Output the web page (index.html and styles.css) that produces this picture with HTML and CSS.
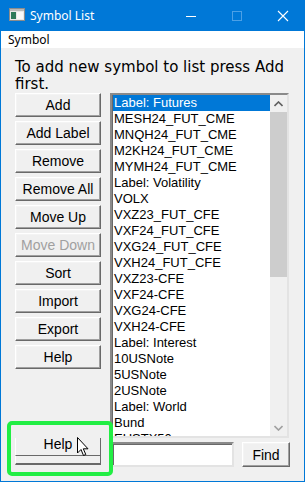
FILE: index.html
```html
<!DOCTYPE html>
<html lang="en">
<head>
    <meta charset="UTF-8">
    <title>Symbol List</title>
    <link rel="stylesheet" href="styles.css">
</head>
<body>
<div class="window">
    <div class="titlebar">
        <svg class="app-icon" width="16" height="14" viewBox="0 0 16 14">
            <rect x="0.5" y="0.5" width="15" height="12" fill="#e8e8e8" stroke="#8c8c8c"/>
            <rect x="1" y="1" width="14" height="2" fill="#b9b9b9"/>
            <rect x="2" y="4" width="5" height="7" fill="#2d7a5a"/>
            <rect x="8" y="4" width="6" height="7" fill="#f8f8f8"/>
        </svg>
        <span class="title">Symbol List</span>
        <div class="caption-buttons">
            <svg width="46" height="30" viewBox="0 0 46 30"><line x1="18" y1="15.5" x2="28" y2="15.5" stroke="#fff"/></svg>
            <svg width="46" height="30" viewBox="0 0 46 30"><rect x="18.5" y="10.5" width="9" height="9" fill="none" stroke="#4ca0e6"/></svg>
            <svg width="46" height="30" viewBox="0 0 46 30"><path d="M18 10 L28 20 M28 10 L18 20" stroke="#fff" stroke-width="1.1"/></svg>
        </div>
    </div>
    <div class="menubar"><span>Symbol</span></div>

    <div class="content">
        <p class="hint">To add new symbol to list press Add first.</p>

        <div class="main">
            <div class="buttons">
                <button class="btn">Add</button>
                <button class="btn">Add Label</button>
                <button class="btn">Remove</button>
                <button class="btn">Remove All</button>
                <button class="btn">Move Up</button>
                <button class="btn" disabled>Move Down</button>
                <button class="btn">Sort</button>
                <button class="btn">Import</button>
                <button class="btn">Export</button>
                <button class="btn">Help</button>
            </div>

            <div class="listbox">
                <ul class="items">
                    <li class="selected">Label: Futures</li>
                    <li>MESH24_FUT_CME</li>
                    <li>MNQH24_FUT_CME</li>
                    <li>M2KH24_FUT_CME</li>
                    <li>MYMH24_FUT_CME</li>
                    <li>Label: Volatility</li>
                    <li>VOLX</li>
                    <li>VXZ23_FUT_CFE</li>
                    <li>VXF24_FUT_CFE</li>
                    <li>VXG24_FUT_CFE</li>
                    <li>VXH24_FUT_CFE</li>
                    <li>VXZ23-CFE</li>
                    <li>VXF24-CFE</li>
                    <li>VXG24-CFE</li>
                    <li>VXH24-CFE</li>
                    <li>Label: Interest</li>
                    <li>10USNote</li>
                    <li>5USNote</li>
                    <li>2USNote</li>
                    <li>Label: World</li>
                    <li>Bund</li>
                    <li>EUSTX50</li>
                </ul>
                <div class="scrollbar">
                    <div class="arrow">
                        <svg width="9" height="6" viewBox="0 0 9 6"><path d="M0.5 5 L4.5 1 L8.5 5" fill="none" stroke="#606060" stroke-width="1.6"/></svg>
                    </div>
                    <div class="thumb"></div>
                    <div class="track"></div>
                    <div class="arrow">
                        <svg width="9" height="6" viewBox="0 0 9 6"><path d="M0.5 1 L4.5 5 L8.5 1" fill="none" stroke="#a0a0a0" stroke-width="1.6"/></svg>
                    </div>
                </div>
            </div>
        </div>

        <div class="bottom">
            <div class="help-ghost">
                <div class="ghost-top">Help</div>
                <div class="ghost-bottom"></div>
            </div>
            <input type="text" class="find-input">
            <button class="btn find-btn">Find</button>
        </div>

        <div class="highlight"></div>
        <svg class="cursor" width="14" height="21" viewBox="0 0 14 21">
            <path d="M0.5 0.5 L0.5 16 L4 12.5 L6.5 18.5 L8.8 17.5 L6.3 11.8 L11 11.8 Z" fill="#fff" stroke="#000" stroke-linejoin="miter"/>
        </svg>
    </div>
</div>
</body>
</html>
```

FILE: styles.css
```css
* {
    box-sizing: border-box;
}
body {
    margin: 0;
    background-color: #f0f0f0;
    font-family: "Liberation Sans", Arial, sans-serif;
}
.window {
    width: 305px;
    height: 482px;
    border: 1px solid #0078d7;
    border-top: none;
    background-color: #f0f0f0;
    display: flex;
    flex-direction: column;
}
.titlebar {
    height: 31px;
    background-color: #0078d7;
    color: white;
    display: flex;
    align-items: center;
    margin: 0 -1px;
    padding-left: 9px;
}
.app-icon {
    margin-top: -1px;
}
.title {
    font-family: "Noto Sans", sans-serif;
    font-size: 12px;
    margin-left: 5px;
    flex: 1;
}
.caption-buttons {
    display: flex;
    margin-right: -1px;
}
.caption-buttons svg {
    display: block;
}
.menubar {
    height: 17px;
    background-color: white;
    font-family: "Noto Sans", sans-serif;
    font-size: 12px;
    line-height: 17px;
    padding-left: 7px;
}
.content {
    position: relative;
    flex: 1;
    padding: 11px 14px 0 14px;
}
.hint {
    margin: 0;
    font-family: "DejaVu Sans", sans-serif;
    font-size: 15px;
    line-height: 17px;
    color: black;
}
.main {
    display: flex;
    height: 345px;
}
.buttons {
    width: 86px;
    display: flex;
    flex-direction: column;
    gap: 4px;
}
.btn {
    height: 24px;
    padding: 0;
    font-family: "Liberation Sans", Arial, sans-serif;
    font-size: 14px;
    color: black;
    background-color: #f0f0f0;
    border: 1px solid;
    border-color: #ffffff #696969 #696969 #ffffff;
    box-shadow: inset -1px -1px #a0a0a0, inset 1px 1px #f4f4f4;
    border-radius: 0;
}
.btn:disabled {
    color: #a0a0a0;
}
.listbox {
    margin-left: 9px;
    width: 179px;
    height: 345px;
    display: flex;
    background-color: white;
    border: 2px solid;
    border-color: #8a8a8a #e3e3e3 #e3e3e3 #8a8a8a;
    box-shadow: inset 1px 1px #696969;
    overflow: hidden;
}
.items {
    list-style: none;
    margin: 0;
    padding: 0 0 0 1px;
    flex: 1;
    font-size: 13px;
    line-height: 16px;
    color: black;
    overflow: hidden;
}
.items li {
    padding-left: 1px;
    height: 16px;
    white-space: nowrap;
}
.items .selected {
    background-color: #0078d7;
    color: white;
}
.scrollbar {
    width: 17px;
    display: flex;
    flex-direction: column;
    background-color: #f0f0f0;
}
.arrow {
    height: 17px;
    display: flex;
    align-items: center;
    justify-content: center;
}
.thumb {
    height: 165px;
    background-color: #cdcdcd;
}
.track {
    flex: 1;
}
.bottom {
    display: flex;
    align-items: flex-start;
    height: 31px;
}
.help-ghost {
    width: 86px;
    font-size: 14px;
}
.ghost-top {
    height: 18px;
    border-left: 1px solid white;
    border-right: 1px solid #696969;
    border-bottom: 1px solid #696969;
    text-align: center;
    line-height: 12px;
    color: black;
}
.ghost-bottom {
    height: 9px;
    border-left: 1px solid white;
    border-right: 1px solid #696969;
    border-bottom: 2px solid #696969;
}
.find-input {
    margin: 4px 0 0 10px;
    width: 123px;
    height: 25px;
    background-color: white;
    border: 2px solid;
    border-color: #8a8a8a #e3e3e3 #e3e3e3 #8a8a8a;
    box-shadow: inset 1px 1px #696969;
    padding: 0;
}
.find-btn {
    margin: 4px 0 0 8px;
    width: 48px;
    height: 25px;
}
.highlight {
    position: absolute;
    left: 6px;
    top: 373px;
    width: 106px;
    height: 55px;
    border: 4px solid #22ee44;
    border-radius: 5px;
}
.cursor {
    position: absolute;
    left: 76px;
    top: 389px;
}
```
